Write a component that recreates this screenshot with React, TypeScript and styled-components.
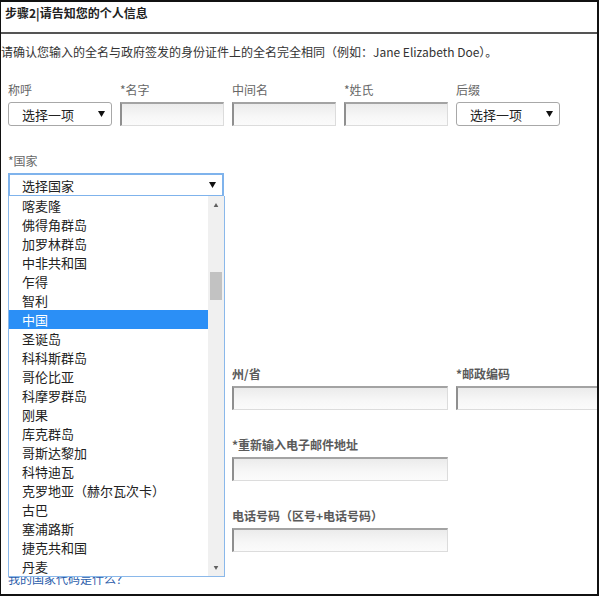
import styled, { createGlobalStyle } from 'styled-components';

const GlobalStyle = createGlobalStyle`
  html, body {
    margin: 0;
    padding: 0;
    background: #fff;
  }
  body {
    font-family: "Noto Sans CJK SC", "Liberation Sans", sans-serif;
    color: #333;
  }
`;

const countries = [
  '喀麦隆',
  '佛得角群岛',
  '加罗林群岛',
  '中非共和国',
  '乍得',
  '智利',
  '中国',
  '圣诞岛',
  '科科斯群岛',
  '哥伦比亚',
  '科摩罗群岛',
  '刚果',
  '库克群岛',
  '哥斯达黎加',
  '科特迪瓦',
  '克罗地亚（赫尔瓦次卡）',
  '古巴',
  '塞浦路斯',
  '捷克共和国',
  '丹麦',
];

const selected = '中国';

function Caret({ up = false, color = '#111' }: { up?: boolean; color?: string }) {
  return (
    <svg width="7" height="6" viewBox="0 0 7 6">
      <path d={up ? 'M0 6 L3.5 0 L7 6 Z' : 'M0 0 L7 0 L3.5 6 Z'} fill={color} />
    </svg>
  );
}

export default function App() {
  return (
    <>
      <GlobalStyle />
      <Frame>
        <StepHeader>步骤2|请告知您的个人信息</StepHeader>
        <Intro>
          请确认您输入的全名与政府签发的身份证件上的全名完全相同（例如：Jane Elizabeth Doe）。
        </Intro>

        <FormGrid>
          <Field $row={1} $col={1}>
            <Label>称呼</Label>
            <SelectBox>
              选择一项
              <Caret />
            </SelectBox>
          </Field>
          <Field $row={1} $col={2}>
            <Label>*名字</Label>
            <TextInput />
          </Field>
          <Field $row={1} $col={3}>
            <Label>中间名</Label>
            <TextInput />
          </Field>
          <Field $row={1} $col={4}>
            <Label>*姓氏</Label>
            <TextInput />
          </Field>
          <Field $row={1} $col={5}>
            <Label>后缀</Label>
            <SelectBox>
              选择一项
              <Caret />
            </SelectBox>
          </Field>

          <Field $row={2} $col={1} $span={2}>
            <Label>*国家</Label>
            <CountryPicker>
              <SelectBox $open>
                选择国家
                <Caret />
              </SelectBox>
              <OptionList>
                <Options>
                  {countries.map((name) => (
                    <OptionItem key={name} $active={name === selected}>
                      {name}
                    </OptionItem>
                  ))}
                </Options>
                <ScrollTrack>
                  <ScrollArrow>
                    <Caret up color="#606060" />
                  </ScrollArrow>
                  <ScrollThumb />
                  <ScrollArrow>
                    <Caret color="#606060" />
                  </ScrollArrow>
                </ScrollTrack>
              </OptionList>
            </CountryPicker>
          </Field>

          <Field $row={5} $col={3} $span={2}>
            <Label $strong>州/省</Label>
            <TextInput />
          </Field>
          <Field $row={5} $col={5} $span={2}>
            <Label $strong>*邮政编码</Label>
            <TextInput />
          </Field>

          <Field $row={6} $col={3} $span={2}>
            <Label $strong>*重新输入电子邮件地址</Label>
            <TextInput />
          </Field>

          <Field $row={7} $col={3} $span={2}>
            <Label $strong>电话号码（区号+电话号码）</Label>
            <TextInput />
          </Field>
        </FormGrid>

        <HelpLink href="#">我的国家代码是什么？</HelpLink>
      </Frame>
    </>
  );
}

const Frame = styled.div`
  position: relative;
  width: 599px;
  height: 596px;
  box-sizing: border-box;
  border: 2px solid #111;
  border-left-width: 1px;
  overflow: hidden;
  background: #fff;
`;

const StepHeader = styled.div`
  height: 30px;
  padding-left: 4px;
  line-height: 22px;
  font-size: 12px;
  font-weight: 700;
  color: #222;
  border-bottom: 2px solid #555;
`;

const Intro = styled.p`
  margin: 10px 0 0;
  font-size: 12px;
  line-height: 16px;
  color: #333;
  white-space: nowrap;
`;

const FormGrid = styled.div`
  display: grid;
  grid-template-columns: repeat(6, 104px);
  grid-template-rows: repeat(7, 44px);
  column-gap: 8px;
  row-gap: 27px;
  margin-top: 22px;
  padding-left: 7px;
`;

const Field = styled.div<{ $row: number; $col: number; $span?: number }>`
  grid-row: ${({ $row }) => $row};
  grid-column: ${({ $col, $span = 1 }) => `${$col} / span ${$span}`};
  display: flex;
  flex-direction: column;
`;

const Label = styled.label<{ $strong?: boolean }>`
  height: 16px;
  margin-bottom: 4px;
  font-size: 12px;
  line-height: 16px;
  white-space: nowrap;
  color: ${({ $strong }) => ($strong ? '#5a5a5a' : '#666')};
  font-weight: ${({ $strong }) => ($strong ? 700 : 400)};
`;

const TextInput = styled.div`
  height: 24px;
  box-sizing: border-box;
  border: 1px solid #dcdcdc;
  border-top: 2px solid #a3a3a3;
  border-left: 2px solid #8f8f8f;
  background: linear-gradient(#ebebeb, #f7f7f7 60%, #fbfbfb);
`;

const SelectBox = styled.div<{ $open?: boolean }>`
  display: flex;
  align-items: center;
  justify-content: space-between;
  height: 24px;
  box-sizing: border-box;
  padding: ${({ $open }) => ($open ? '0 6px 0 12px' : '0 6px 0 13px')};
  border: ${({ $open }) => ($open ? '2px solid #7fb3ec' : '1px solid #a8a8a8')};
  border-radius: ${({ $open }) => ($open ? '0' : '3px')};
  background: #fff;
  font-size: 13px;
  color: #222;
  white-space: nowrap;
`;

const CountryPicker = styled.div`
  position: relative;
`;

const OptionList = styled.div`
  position: absolute;
  top: calc(100% - 1px);
  left: 0;
  width: 217px;
  height: 381px;
  box-sizing: border-box;
  display: flex;
  border: 1px solid #8ab8ea;
  border-top: none;
  background: #fff;
  z-index: 10;
`;

const Options = styled.ul`
  flex: 1;
  margin: 0;
  padding: 0;
  list-style: none;
  overflow: hidden;
`;

const OptionItem = styled.li<{ $active?: boolean }>`
  height: 19px;
  padding-left: 13px;
  font-size: 13px;
  line-height: 19px;
  white-space: nowrap;
  color: ${({ $active }) => ($active ? '#fff' : '#222')};
  background: ${({ $active }) => ($active ? '#2b8ff6' : 'transparent')};
`;

const ScrollTrack = styled.div`
  width: 16px;
  display: flex;
  flex-direction: column;
  align-items: center;
  background: #f0f0f0;
`;

const ScrollArrow = styled.div`
  height: 17px;
  display: flex;
  align-items: center;
  justify-content: center;
  & svg {
    width: 8px;
    height: 4px;
  }
`;

const ScrollThumb = styled.div`
  width: 12px;
  height: 28px;
  margin-top: 59px;
  margin-bottom: auto;
  background: #c2c2c2;
`;

const HelpLink = styled.a`
  display: block;
  margin: 19px 0 0 7px;
  font-size: 12px;
  line-height: 16px;
  color: #2a5caa;
  text-decoration: none;
`;
